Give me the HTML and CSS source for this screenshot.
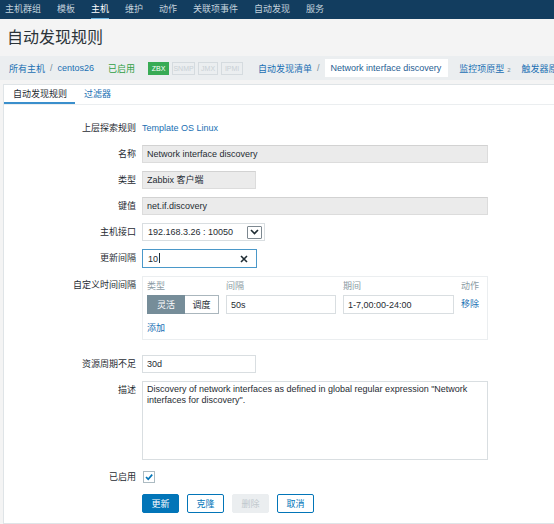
FILE: index.html
```html
<!DOCTYPE html>
<html lang="zh-CN">
<head>
<meta charset="utf-8">
<title>自动发现规则</title>
<link rel="stylesheet" href="styles.css">
</head>
<body>
<div class="page">
  <nav class="topnav">
    <a class="nav-item">主机群组</a>
    <a class="nav-item">模板</a>
    <a class="nav-item active">主机</a>
    <a class="nav-item">维护</a>
    <a class="nav-item">动作</a>
    <a class="nav-item">关联项事件</a>
    <a class="nav-item">自动发现</a>
    <a class="nav-item">服务</a>
  </nav>

  <header class="title-bar"><h1 class="title">自动发现规则</h1></header>

  <div class="crumbs">
    <a class="link">所有主机</a><span class="sep">/</span><a class="link">centos26</a>
    <span class="status">已启用</span>
    <span class="badges">
      <span class="badge on b-zbx">ZBX</span><span class="badge b-snmp">SNMP</span><span class="badge b-jmx">JMX</span><span class="badge b-ipmi">IPMI</span>
    </span>
    <a class="link list">自动发现清单</a><span class="sep">/</span><span class="current">Network interface discovery</span>
    <a class="link proto">监控项原型<sup class="count">2</sup></a>
    <a class="link proto">触发器原型</a>
  </div>

  <section class="panel">
    <div class="tabs">
      <span class="tab active">自动发现规则</span>
      <a class="tab link">过滤器</a>
    </div>

    <form class="form">
      <label class="lbl">上层探索规则</label>
      <div class="val"><a class="link">Template OS Linux</a></div>

      <label class="lbl">名称</label>
      <div class="val"><input class="input ro wide" value="Network interface discovery" readonly></div>

      <label class="lbl">类型</label>
      <div class="val"><input class="input ro short" value="Zabbix 客户端" readonly></div>

      <label class="lbl">键值</label>
      <div class="val"><input class="input ro wide" value="net.if.discovery" readonly></div>

      <label class="lbl">主机接口</label>
      <div class="val">
        <div class="select">
          <span>192.168.3.26 : 10050</span>
          <span class="arrow"><svg width="9" height="6" viewBox="0 0 9 6"><polyline points="1,1 4.5,4.5 8,1" fill="none" stroke="#1f2c33" stroke-width="1.6"/></svg></span>
        </div>
      </div>

      <label class="lbl">更新间隔</label>
      <div class="val">
        <div class="input focus update">
          <span>10<span class="caret"></span></span>
          <svg class="clear" width="8" height="8" viewBox="0 0 8 8"><path d="M1 1L7 7M7 1L1 7" stroke="#1f2c33" stroke-width="1.6"/></svg>
        </div>
      </div>

      <label class="lbl">自定义时间间隔</label>
      <div class="val custom-row">
        <div class="custom">
          <div class="cgrid">
            <span class="chead">类型</span>
            <span class="chead">间隔</span>
            <span class="chead">期间</span>
            <span class="chead">动作</span>
            <span class="seg"><span class="seg-btn sel">灵活</span><span class="seg-btn">调度</span></span>
            <input class="input cin" value="50s">
            <input class="input cin" value="1-7,00:00-24:00">
            <a class="link act">移除</a>
          </div>
          <a class="link add">添加</a>
        </div>
      </div>

      <label class="lbl">资源周期不足</label>
      <div class="val"><input class="input short" value="30d"></div>

      <label class="lbl">描述</label>
      <div class="val"><textarea class="textarea">Discovery of network interfaces as defined in global regular expression "Network interfaces for discovery".</textarea></div>

      <label class="lbl">已启用</label>
      <div class="val">
        <span class="check"><svg width="10" height="10" viewBox="0 0 10 10"><polyline points="2,5 4.2,7.2 8.2,2.6" fill="none" stroke="#0275b8" stroke-width="1.7"/></svg></span>
      </div>

      <span></span>
      <div class="buttons">
        <button type="button" class="btn primary">更新</button>
        <button type="button" class="btn alt">克隆</button>
        <button type="button" class="btn disabled">删除</button>
        <button type="button" class="btn alt">取消</button>
      </div>
    </form>
  </section>
</div>
</body>
</html>
```

FILE: styles.css
```css
* { box-sizing: border-box; }

html, body {
  margin: 0;
  padding: 0;
  overflow: hidden;
}

body {
  background: #f4f4f4;
  font-family: "Liberation Sans", "Noto Sans CJK SC", sans-serif;
  font-size: 9px;
  color: #1f2c33;
}

.page {
  width: 640px;
}

a { text-decoration: none; cursor: pointer; }
.link { color: #1a6fb3; }

/* top navigation */
.topnav {
  display: flex;
  gap: 16px;
  height: 19px;
  padding-left: 5px;
  background: #123d5f;
}
.nav-item {
  line-height: 18px;
  color: #c3d2dd;
  border-bottom: 1px solid transparent;
}
.nav-item.active {
  color: #ffffff;
  border-bottom-color: #6fb6e0;
}

/* title */
.title-bar {
  height: 37px;
  padding-left: 7px;
}
.title {
  margin: 0;
  font-size: 16px;
  font-weight: normal;
  line-height: 37px;
  color: #2b3338;
}

/* breadcrumbs */
.crumbs {
  display: flex;
  align-items: center;
  height: 24px;
  padding-left: 9px;
  background: #ebeef0;
  white-space: nowrap;
}
.sep {
  margin: 0 5px;
  color: #768d99;
}
.status {
  margin-left: 14px;
  color: #2f9e44;
}
.badges {
  display: flex;
  gap: 3px;
  margin-left: 13px;
}
.badge {
  text-align: center;
  line-height: 11px;
  border: 1px solid #d5dbdf;
  color: #c9d0d5;
  font-size: 7px;
}
.b-zbx { width: 21px; }
.b-snmp { width: 23px; }
.b-jmx { width: 20px; }
.b-ipmi { width: 22px; }
.badge.on {
  background: #38ab55;
  border-color: #38ab55;
  color: #ffffff;
}
.list { margin-left: 15px; }
.current {
  padding: 0 7px 0 6px;
  line-height: 18px;
  background: #ffffff;
  color: #1f5e93;
}
.proto { margin-left: 11px; }
.count {
  font-size: 6px;
  color: #768d99;
  margin-left: 3px;
  vertical-align: 0;
}

/* panel */
.panel {
  margin: 4px 0 0 3px;
  height: 440px;
  background: #ffffff;
  border: 1px solid #dfe4e7;
}
.tabs {
  display: flex;
  height: 20px;
  border-bottom: 1px solid #ebeef0;
}
.tab {
  padding: 0 8px 0 9px;
  line-height: 19px;
}
.tab.active {
  color: #1f2c33;
  border-bottom: 2px solid #3a8fcc;
}

/* form */
.form {
  display: grid;
  grid-template-columns: 132px 1fr;
  column-gap: 6px;
  row-gap: 8px;
  padding-top: 14px;
}
.lbl {
  text-align: right;
  line-height: 18px;
  color: #1f2c33;
  white-space: nowrap;
}
.val {
  min-height: 18px;
  line-height: 18px;
}

.input {
  display: block;
  height: 18px;
  padding: 0 4px;
  border: 1px solid #d9dee1;
  background: #ffffff;
  font: inherit;
  color: #1f2c33;
  outline: none;
}
.input.ro {
  background: #ebebeb;
  border-color: #dcdcdc;
  border-top-color: #d2d2d2;
}
.wide { width: 346px; }
.short { width: 114px; }

.select {
  display: flex;
  align-items: center;
  justify-content: space-between;
  width: 123px;
  height: 18px;
  padding: 0 2px 0 5px;
  border: 1px solid #d9dee1;
}
.arrow {
  display: flex;
  align-items: center;
  justify-content: center;
  width: 15px;
  height: 13px;
  border: 1px solid #7d8890;
  border-radius: 1px;
}

.update {
  display: flex;
  align-items: center;
  justify-content: space-between;
  width: 115px;
  height: 19px;
  padding: 0 8px 0 5px;
  border-color: #4a98c9;
}
.caret {
  display: inline-block;
  width: 1px;
  height: 10px;
  margin-left: 1px;
  background: #1f2c33;
  vertical-align: -1px;
}

.custom-row { padding-bottom: 7px; }
.custom {
  width: 346px;
  padding: 3px 4px 4px;
  border: 1px solid #ebeef0;
  line-height: normal;
}
.cgrid {
  display: grid;
  grid-template-columns: 72px 110px 111px auto;
  grid-template-rows: 12px 19px;
  column-gap: 7px;
  row-gap: 3px;
  align-items: center;
}
.chead {
  color: #8c9ba4;
  line-height: 12px;
}
.seg {
  display: flex;
  height: 19px;
}
.seg-btn {
  display: flex;
  align-items: center;
  justify-content: center;
  height: 19px;
  border: 1px solid #aab6bd;
  color: #1f2c33;
}
.seg-btn.sel {
  width: 38px;
  background: #768d99;
  border-color: #768d99;
  color: #ffffff;
}
.seg-btn:last-child { width: 34px; border-left: none; }
.cin {
  width: 100%;
  height: 19px;
}
.act { line-height: 19px; }
.add {
  display: block;
  margin-top: 7px;
  line-height: 14px;
}

.textarea {
  display: block;
  width: 346px;
  height: 79px;
  padding: 2px 4px;
  border: 1px solid #d9dee1;
  font: inherit;
  line-height: 11px;
  color: #1f2c33;
  resize: none;
  outline: none;
}

.check {
  display: inline-flex;
  align-items: center;
  justify-content: center;
  width: 12px;
  height: 12px;
  margin: 3px 0 0 1px;
  border: 1px solid #acbbc2;
  vertical-align: top;
}

.buttons {
  display: flex;
  gap: 8px;
}
.btn {
  width: 37px;
  height: 19px;
  padding: 0;
  border: 1px solid #0275b8;
  background: #ffffff;
  color: #0275b8;
  font: inherit;
  border-radius: 2px;
}
.btn.primary {
  background: #0275b8;
  color: #ffffff;
}
.btn.disabled {
  background: #ebeef0;
  border-color: #ebeef0;
  color: #c0c8cd;
}
```
